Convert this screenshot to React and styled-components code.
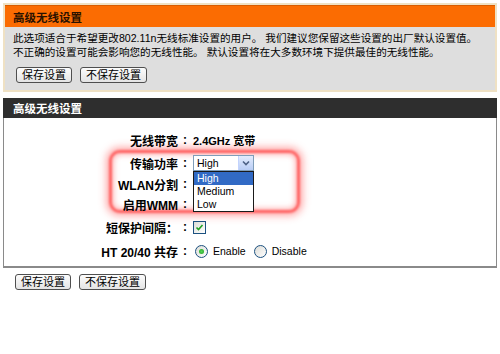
import React from 'react';
import styled, { createGlobalStyle } from 'styled-components';

const GlobalStyle = createGlobalStyle`
    html, body {
        margin: 0;
        padding: 0;
        background: #ffffff;
    }
    body {
        font-family: 'Liberation Sans', 'Noto Sans CJK SC', sans-serif;
        color: #000;
    }
`;

const Page = styled.div`
    width: 500px;
    height: 354px;
    padding: 3px 3px 0 3px;
    box-sizing: border-box;
    overflow: hidden;
`;

const InfoPanel = styled.section`
    border: 2px solid #efe1c4;
    background: #dedede;
`;

const OrangeBar = styled.h2`
    margin: 0;
    height: 22px;
    box-sizing: border-box;
    display: flex;
    align-items: center;
    padding-left: 8px;
    background: #fb6c02;
    border-top: 1px solid #d85c00;
    font-size: 11.5px;
    font-weight: 700;
    color: #2a1200;
`;

const Intro = styled.div`
    padding: 4px 8px 7px;
`;

const Line = styled.p`
    margin: 0;
    font-size: 10.6px;
    line-height: 14px;
    white-space: nowrap;
`;

const ButtonRow = styled.div`
    display: flex;
    gap: 8px;
    margin-top: ${({ top }) => top}px;
    padding-left: ${({ left }) => left}px;
`;

const Button = styled.button`
    height: 16px;
    padding: 0 5px;
    border: 1px solid #4f4f4f;
    border-radius: 3px;
    background: linear-gradient(#fcfcfc, #e4e4e4);
    font-family: 'Liberation Sans', 'Noto Sans CJK SC', sans-serif;
    font-size: 11px;
    line-height: 14px;
    color: #000;
`;

const SettingsPanel = styled.section`
    margin-top: 6px;
`;

const DarkBar = styled.h2`
    margin: 0;
    height: 20px;
    display: flex;
    align-items: center;
    padding-left: 10px;
    background: #2e2e2e;
    font-size: 11.5px;
    font-weight: 700;
    color: #ffffff;
`;

const Body = styled.div`
    position: relative;
    background: #fff;
    border: 1px solid #8a8a8a;
    border-top: none;
    border-bottom-width: 2px;
    padding: 11px 0 3px;
`;

const Row = styled.div`
    position: relative;
    z-index: 1;
    display: grid;
    grid-template-columns: 174px 14px auto;
    align-items: center;
    height: ${({ h }) => h}px;
`;

const Label = styled.span`
    text-align: right;
    font-size: 12px;
    font-weight: 700;
    white-space: nowrap;
`;

const Colon = styled.span`
    text-align: center;
    font-size: 12px;
    font-weight: 700;
`;

const Value = styled.span`
    position: relative;
    display: flex;
    align-items: center;
    gap: 5px;
    padding-left: 1px;
    font-size: ${({ size }) => size || 10.5}px;
    font-weight: ${({ bold }) => (bold ? 700 : 400)};
    white-space: nowrap;
`;

const Select = styled.span`
    display: flex;
    align-items: center;
    justify-content: space-between;
    width: 61px;
    height: 16px;
    box-sizing: border-box;
    border: 1px solid #7f9db9;
    background: #fff;
    padding-left: 3px;
    font-size: 10.5px;
`;

const Arrow = styled.span`
    display: flex;
    align-items: center;
    justify-content: center;
    width: 14px;
    height: 14px;
    background: linear-gradient(#e3ecfd, #b9cdf5);
    border-left: 1px solid #c3d3fd;
`;

const List = styled.ul`
    position: absolute;
    top: 16px;
    left: 1px;
    z-index: 2;
    width: 61px;
    margin: 0;
    padding: 0;
    box-sizing: border-box;
    list-style: none;
    background: #fff;
    border: 1px solid #1a1a1a;
`;

const Option = styled.li`
    height: 13px;
    line-height: 13px;
    padding-left: 3px;
    font-size: 10.5px;
    background: ${({ active }) => (active ? '#316ac5' : '#fff')};
    color: ${({ active }) => (active ? '#fff' : '#000')};
`;

const Check = styled.span`
    display: flex;
    align-items: center;
    justify-content: center;
    width: 11px;
    height: 11px;
    border: 1px solid #1c5180;
    background: linear-gradient(135deg, #dcdcd7, #fff);
`;

const Radio = styled.span`
    display: flex;
    align-items: center;
    justify-content: center;
    width: 11px;
    height: 11px;
    border-radius: 50%;
    border: 1px solid #1c5180;
    background: linear-gradient(135deg, #dcdcd7, #fff);
    margin-left: ${({ gap }) => gap || 0}px;
`;

const Dot = styled.span`
    width: 5px;
    height: 5px;
    border-radius: 50%;
    background: radial-gradient(#55d455, #21a121);
`;

const Glow = styled.div`
    position: absolute;
    left: 105px;
    top: 32px;
    width: 191px;
    height: 63px;
    box-sizing: border-box;
    border: 3px solid rgba(255, 70, 70, 0.85);
    border-radius: 11px;
    box-shadow: 0 0 7px 3px rgba(255, 90, 90, 0.5), inset 0 0 5px 2px rgba(255, 100, 100, 0.45);
    filter: blur(1.2px);
    pointer-events: none;
    z-index: 0;
`;

const App = () => {
    return (
        <Page>
            <GlobalStyle />
            <InfoPanel>
                <OrangeBar>高级无线设置</OrangeBar>
                <Intro>
                    <Line>此选项适合于希望更改802.11n无线标准设置的用户。 我们建议您保留这些设置的出厂默认设置值。</Line>
                    <Line>不正确的设置可能会影响您的无线性能。 默认设置将在大多数环境下提供最佳的无线性能。</Line>
                    <ButtonRow top={8} left={3}>
                        <Button>保存设置</Button>
                        <Button>不保存设置</Button>
                    </ButtonRow>
                </Intro>
            </InfoPanel>

            <SettingsPanel>
                <DarkBar>高级无线设置</DarkBar>
                <Body>
                    <Glow />
                    <Row h={22}>
                        <Label>无线带宽</Label>
                        <Colon>:</Colon>
                        <Value bold size={11}>2.4GHz 宽带</Value>
                    </Row>
                    <Row h={24}>
                        <Label>传输功率</Label>
                        <Colon>:</Colon>
                        <Value>
                            <Select>
                                High
                                <Arrow>
                                    <svg width="8" height="6" viewBox="0 0 8 6">
                                        <path d="M1 1.5 L4 4.5 L7 1.5" fill="none" stroke="#4d6185" strokeWidth="1.6" />
                                    </svg>
                                </Arrow>
                            </Select>
                            <List>
                                <Option active>High</Option>
                                <Option>Medium</Option>
                                <Option>Low</Option>
                            </List>
                        </Value>
                    </Row>
                    <Row h={18}>
                        <Label>WLAN分割</Label>
                        <Colon>:</Colon>
                        <Value />
                    </Row>
                    <Row h={22}>
                        <Label>启用WMM</Label>
                        <Colon>:</Colon>
                        <Value />
                    </Row>
                    <Row h={24}>
                        <Label>短保护间隔：</Label>
                        <Colon>:</Colon>
                        <Value>
                            <Check>
                                <svg width="9" height="9" viewBox="0 0 9 9">
                                    <path d="M1.5 4.5 L3.5 6.5 L7.5 2" fill="none" stroke="#21a121" strokeWidth="1.6" />
                                </svg>
                            </Check>
                        </Value>
                    </Row>
                    <Row h={24}>
                        <Label>HT 20/40 共存</Label>
                        <Colon>:</Colon>
                        <Value>
                            <Radio gap={2}><Dot /></Radio>
                            Enable
                            <Radio gap={3} />
                            Disable
                        </Value>
                    </Row>
                </Body>
            </SettingsPanel>

            <ButtonRow top={6} left={12}>
                <Button>保存设置</Button>
                <Button>不保存设置</Button>
            </ButtonRow>
        </Page>
    );
};

export default App;
